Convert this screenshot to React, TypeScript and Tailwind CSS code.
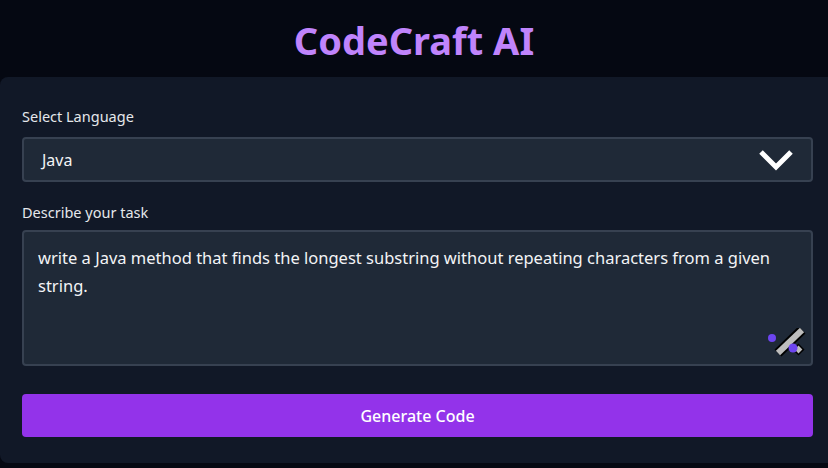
export default function App() {
  const font = { fontFamily: '"Noto Sans", "Open Sans", sans-serif' };
  return (
    <div className="min-h-[468px] w-full overflow-hidden bg-[#050812]" style={font}>
      <h1 className="pt-5 text-center text-[38px] leading-10 font-bold text-[#c084fc]">CodeCraft AI</h1>

      <div className="mt-[17px] rounded-l-lg bg-[#111827] pl-[22px] pr-[15px] pt-[29px] pb-[26px]">
        <label className="mb-[11px] block text-[14.5px] leading-5 text-gray-200">Select Language</label>
        <div className="flex h-[45px] items-center justify-between rounded border-2 border-[#374151] bg-[#1f2937] pl-[18px] pr-[16px]">
          <span className="text-base text-gray-100">Java</span>
          <svg width="38" height="24" viewBox="0 0 38 24" fill="none">
            <polyline points="4,4 19,19 34,4" stroke="white" strokeWidth="5" />
          </svg>
        </div>

        <label className="mt-5 mb-2 block text-[14.5px] leading-5 text-gray-200">Describe your task</label>
        <div className="relative h-[136px] rounded border-2 border-[#374151] bg-[#1f2937] px-[14px] pt-[12px]">
          <p className="text-[16.5px] leading-7 text-gray-100">
            write a Java method that finds the longest substring without repeating characters from a given string.
          </p>
          <svg className="absolute right-[4px] bottom-[0px]" width="40" height="36" viewBox="0 0 40 36">
            <circle cx="5" cy="10" r="4" fill="#6d45f0" />
            <line x1="11" y1="25" x2="35" y2="2" stroke="#000" strokeWidth="10" />
            <line x1="11" y1="25" x2="35" y2="2" stroke="#bdbdbd" strokeWidth="6" />
            <rect x="28" y="18" width="7" height="7" fill="#bdbdbd" stroke="#000" strokeWidth="1.5" transform="rotate(45 31.5 21.5)" />
            <circle cx="26" cy="20" r="4.5" fill="#6d45f0" />
          </svg>
        </div>

        <button className="mt-7 flex h-[43px] w-full items-center justify-center rounded bg-[#9333ea] text-base font-medium text-white">
          Generate Code
        </button>
      </div>
    </div>
  );
}
